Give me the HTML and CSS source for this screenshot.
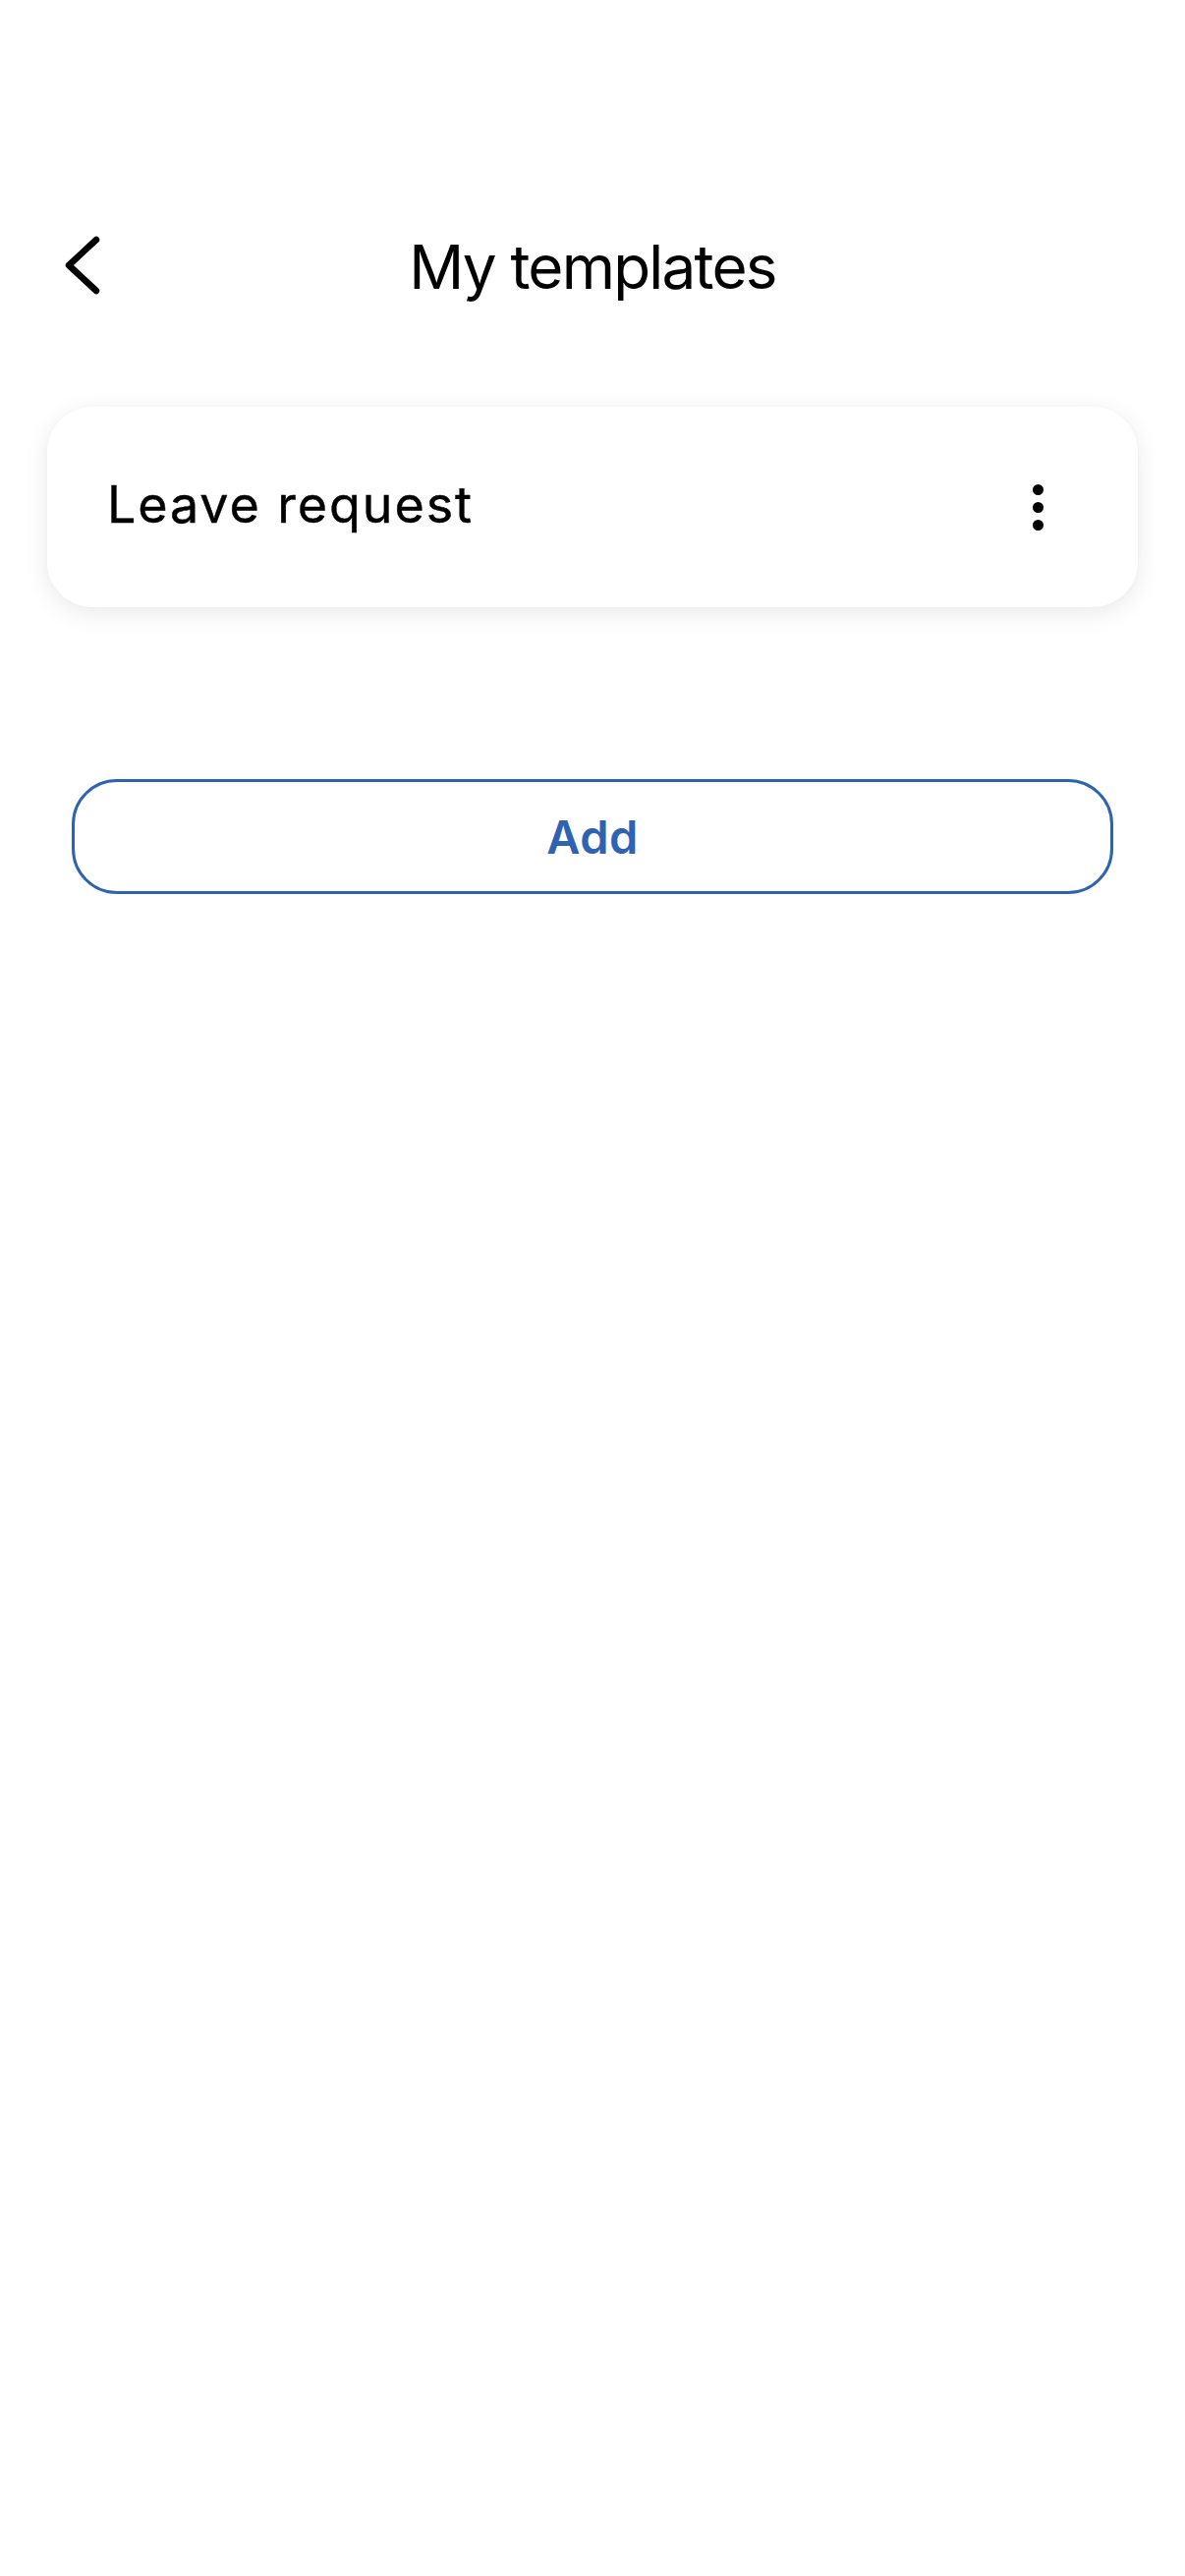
FILE: index.html
```html
<!DOCTYPE html>
<html lang="en">
<head>
<meta charset="utf-8">
<title>My templates</title>
<link rel="stylesheet" href="styles.css">
</head>
<body>
<div class="screen">
  <header class="topbar">
    <button class="back" aria-label="Back">
      <svg width="40" height="64" viewBox="0 0 40 64" aria-hidden="true">
        <path d="M32 5 L4 31 L32 57" fill="none" stroke="#000" stroke-width="6.5" stroke-linecap="round" stroke-linejoin="round"/>
      </svg>
    </button>
    <h1 class="title">My templates</h1>
    <span class="spacer"></span>
  </header>

  <main class="content">
    <div class="card">
      <span class="card-label">Leave request</span>
      <button class="more" aria-label="More options">
        <span class="dot"></span>
        <span class="dot"></span>
        <span class="dot"></span>
      </button>
    </div>

    <button class="add-btn">Add</button>
  </main>
</div>
</body>
</html>
```

FILE: styles.css
```css
* {
  box-sizing: border-box;
}

html, body {
  margin: 0;
  padding: 0;
  background: #ffffff;
}

body {
  font-family: Inter, "Noto Sans", "Liberation Sans", sans-serif;
  color: #000;
}

.screen {
  width: 1206px;
  min-height: 2622px;
  padding-top: 222px;
}

.topbar {
  display: grid;
  grid-template-columns: 1fr auto 1fr;
  align-items: center;
  height: 100px;
}

.back {
  justify-self: start;
  margin-left: 66px;
  margin-top: -2px;
  padding: 0;
  border: none;
  background: none;
  width: 40px;
  height: 64px;
  display: flex;
  align-items: center;
}

.back svg {
  display: block;
}

.title {
  margin: 0;
  font-size: 62px;
  font-weight: 400;
  line-height: 100px;
  letter-spacing: -1.8px;
  text-align: center;
}

.content {
  padding-top: 92px;
  display: flex;
  flex-direction: column;
}

.card {
  margin: 0 48px;
  height: 204px;
  border-radius: 46px;
  background: #fff;
  box-shadow: 0 6px 26px rgba(0, 0, 0, 0.085), 0 0 6px rgba(0, 0, 0, 0.02);
  display: flex;
  align-items: center;
  justify-content: space-between;
  padding: 0 96px 0 61px;
}

.card-label {
  font-size: 52px;
  font-weight: 400;
  letter-spacing: 1.9px;
  line-height: 63px;
  margin-top: -6px;
  -webkit-text-stroke: 0.4px #000;
}

.more {
  border: none;
  background: none;
  padding: 0;
  display: flex;
  flex-direction: column;
  align-items: center;
  gap: 7px;
  width: 11px;
}

.dot {
  width: 11px;
  height: 11px;
  border-radius: 50%;
  background: #000;
  display: block;
}

.add-btn {
  margin: 175px 73px 0;
  height: 117px;
  border: 3px solid #2e63b1;
  border-radius: 46px;
  background: #fff;
  color: #2e63b1;
  font-family: Inter, "Noto Sans", "Liberation Sans", sans-serif;
  font-size: 47px;
  font-weight: 600;
  letter-spacing: 0.5px;
  padding: 0;
}
```
